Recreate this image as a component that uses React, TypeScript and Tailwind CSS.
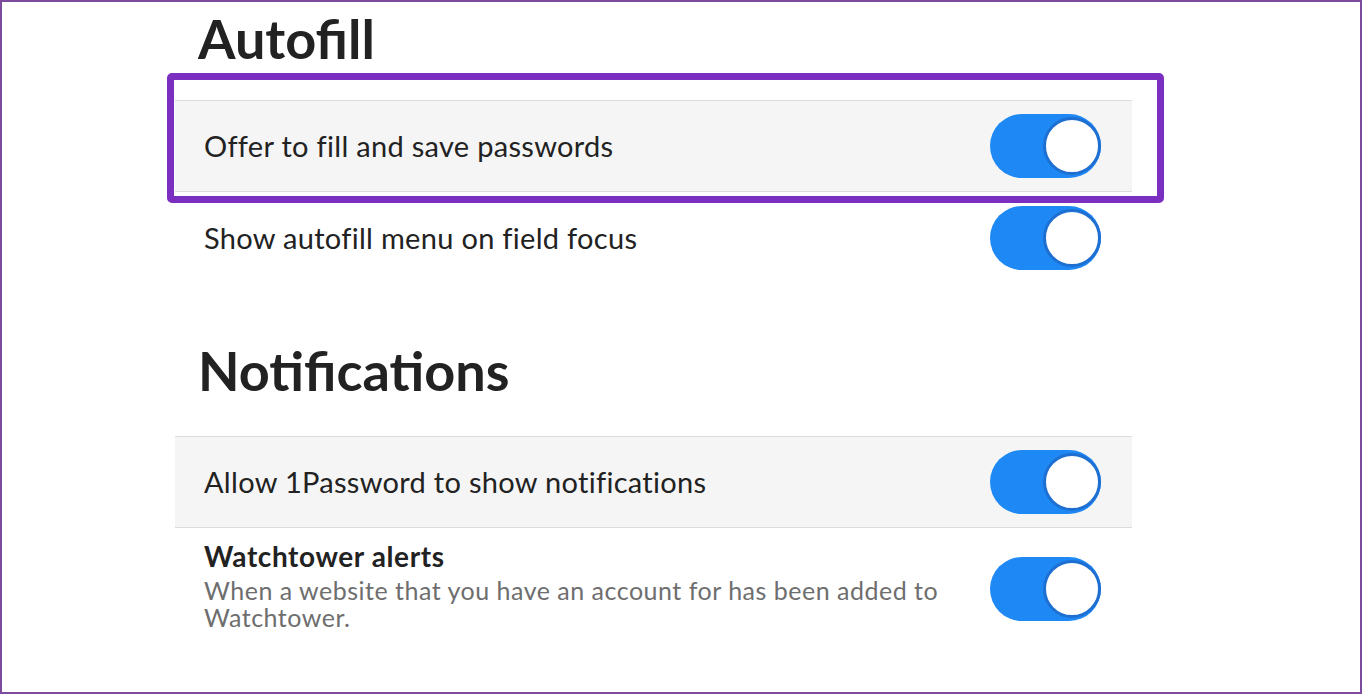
import React from 'react'

function Toggle() {
  return (
    <div className="relative h-[64px] w-[111px] shrink-0 rounded-full bg-[#1e88f5]">
      <div className="absolute right-0 top-[3px] h-[58px] w-[58px] rounded-full border-[3px] border-[#1e6fd2] bg-white" />
    </div>
  )
}

function Row({ label, shaded, children }: { label: string; shaded?: boolean; children?: React.ReactNode }) {
  return (
    <div
      className={`relative flex h-[92px] items-center justify-between pl-[29px] pr-[31px] ${
        shaded ? 'border-y border-[#dcdcdc] bg-[#f5f5f5]' : ''
      }`}
    >
      <span className="text-[29px] tracking-[0.3px] text-[#222222]">{label}</span>
      <Toggle />
      {children}
    </div>
  )
}

export default function App() {
  return (
    <div
      className="h-[694px] w-full overflow-hidden border-2 border-[#7d4b9b] bg-white"
      style={{ fontFamily: 'Lato, "Noto Sans", sans-serif' }}
    >
      <div className="ml-[173px] w-[957px]">
        <h1 className="mb-[34px] mt-[10px] pl-[23px] text-[54px] font-bold leading-[54px] text-[#222222]">Autofill</h1>

        <Row label="Offer to fill and save passwords" shaded>
          <div className="pointer-events-none absolute -bottom-[12px] -left-[8px] -right-[32px] -top-[28px] rounded-[5px] border-[7px] border-[#7b2fc1]" />
        </Row>
        <Row label="Show autofill menu on field focus" />

        <h1 className="mb-[38px] mt-[60px] pl-[23px] text-[54px] font-bold leading-[54px] text-[#222222]">Notifications</h1>

        <Row label="Allow 1Password to show notifications" shaded />

        <div className="flex items-start justify-between pl-[29px] pr-[31px] pt-[12px]">
          <div className="flex flex-col">
            <span className="text-[28px] font-bold leading-[32px] tracking-[0.6px] text-[#222222]">Watchtower alerts</span>
            <span className="mt-[5px] w-[760px] text-[25px] leading-[27px] tracking-[0.5px] text-[#6e6e6e]">
              When a website that you have an account for has been added to Watchtower.
            </span>
          </div>
          <div className="mt-[17px]">
            <Toggle />
          </div>
        </div>
      </div>
    </div>
  )
}
